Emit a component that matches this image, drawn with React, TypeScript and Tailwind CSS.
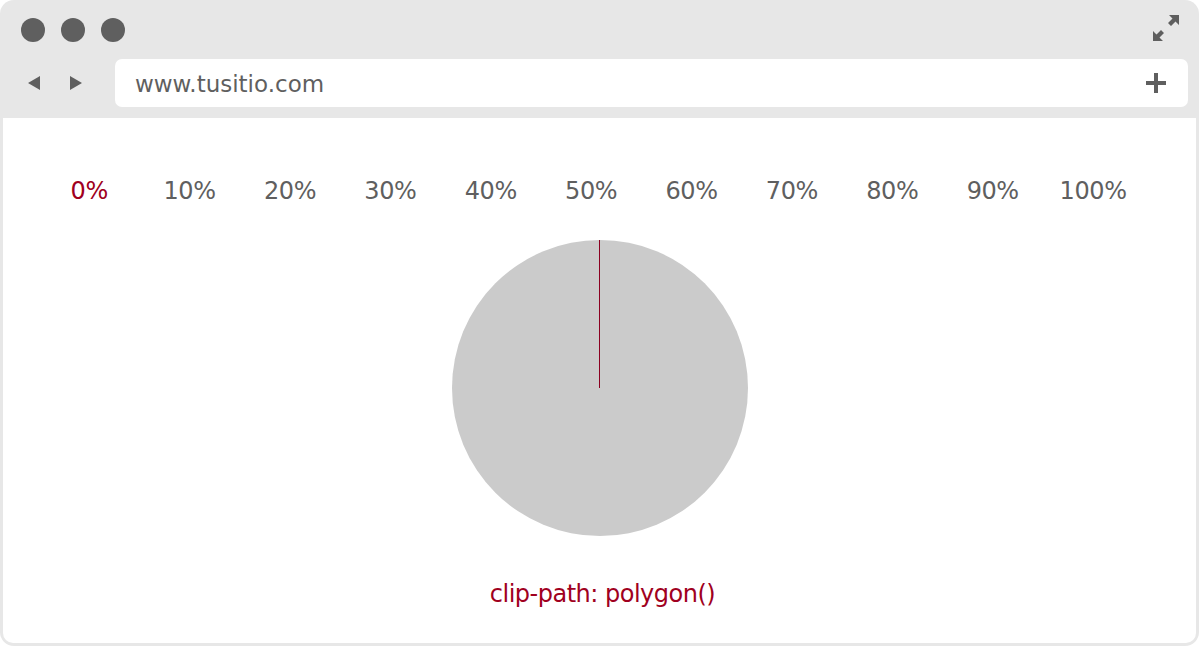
import React from "react";

const labels = ["0%", "10%", "20%", "30%", "40%", "50%", "60%", "70%", "80%", "90%", "100%"];

export default function App() {
  return (
    <div className="w-[1199px] h-[647px] bg-white" style={{ fontFamily: "'DejaVu Sans', Verdana, sans-serif" }}>
      <div className="w-[1199px] h-[646px] bg-[#e7e7e7] rounded-[14px] flex flex-col px-[3px] pb-[3px]">
        <div className="h-[118px] flex flex-col">
          <div className="h-[59px] flex items-center pl-[18px] pr-[16px]">
            <div className="flex gap-[16px] pt-[1px]">
              <div className="w-[24px] h-[24px] rounded-full bg-[#5f5f5f]" />
              <div className="w-[24px] h-[24px] rounded-full bg-[#5f5f5f]" />
              <div className="w-[24px] h-[24px] rounded-full bg-[#5f5f5f]" />
            </div>
            <div className="flex-1" />
            <svg width="28" height="28" viewBox="0 0 28 28" className="mt-[-4px]">
              <path d="M17 1 H27 V11 L23.5 7.5 L19 12 L16 9 L20.5 4.5 Z" fill="#5f5f5f" />
              <path d="M1 17 V27 H11 L7.5 23.5 L12 19 L9 16 L4.5 20.5 Z" fill="#5f5f5f" />
            </svg>
          </div>
          <div className="h-[48px] flex items-center">
            <div className="w-[112px] flex items-center pl-[24px] gap-[28px]">
              <svg width="14" height="16" viewBox="0 0 14 16"><path d="M1 8 L13 1 V15 Z" fill="#5f5f5f" /></svg>
              <svg width="14" height="16" viewBox="0 0 14 16"><path d="M13 8 L1 1 V15 Z" fill="#5f5f5f" /></svg>
            </div>
            <div className="flex-1 h-[48px] mr-[8px] bg-white rounded-[7px] flex items-center pl-[20px] pr-[22px]">
              <span className="text-[23px] text-[#5f5f5f] tracking-[0px] pt-[2px]">www.tusitio.com</span>
              <div className="flex-1" />
              <svg width="20" height="20" viewBox="0 0 20 20"><path d="M8 0 H12 V8 H20 V12 H12 V20 H8 V12 H0 V8 H8 Z" fill="#5f5f5f" /></svg>
            </div>
          </div>
          <div className="h-[11px]" />
        </div>
        <div className="flex-1 bg-white rounded-b-[10px] flex flex-col items-center">
          <div className="flex mt-[57px] w-[1105px] ml-[-16px]">
            {labels.map((l, i) => (
              <div key={l} className={`w-[100.4px] text-center text-[24px] leading-[32px] tracking-[-0.4px] ${i === 0 ? "text-[#a00020]" : "text-[#5f5f5f]"}`}>{l}</div>
            ))}
          </div>
          <div className="mt-[33px] relative w-[296px] h-[296px] rounded-full bg-[#cbcbcb]">
            <div className="absolute left-[147px] top-0 w-[1px] h-[148px] bg-[#8b0020]" />
          </div>
          <div className="mt-[40px] ml-[6px] text-[24px] text-[#a00020] tracking-[-0.5px]">clip-path: polygon()</div>
        </div>
      </div>
    </div>
  );
}
